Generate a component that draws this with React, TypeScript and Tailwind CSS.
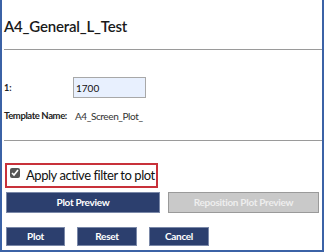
import React from "react";

const font = { fontFamily: "Lato, 'Noto Sans', sans-serif" };

function NavyButton({ label, className }: { label: string; className: string }) {
  return (
    <button
      className={`flex items-center justify-center border border-[#7a88a8] bg-[#2c3f6e] text-[10px] font-bold tracking-[-0.3px] text-white ${className}`}
    >
      {label}
    </button>
  );
}

export default function App() {
  return (
    <div className="h-[252px] w-[324px] bg-white" style={font}>
      <div className="flex h-full flex-col border-x-2 border-b-2 border-[#3b62a6] pl-[2px]">
        {/* Title */}
        <h1 className="pt-[16px] text-[15px] font-semibold leading-[20px] tracking-[-0.2px] text-[#1a1a1a]">
          A4_General_L_Test
        </h1>
        <div className="mt-[13px] h-px bg-[#9a9a9a]" />

        {/* Fields */}
        <div className="mt-[27px] flex items-center">
          <span className="w-[69px] text-[9px] font-bold text-[#222]">1:</span>
          <input
            defaultValue="1700"
            className="h-[21px] w-[73px] border border-[#a8a8a8] bg-[#e8f0fe] px-[2px] text-[10px] text-[#111] outline-none"
            style={font}
          />
        </div>
        <div className="mt-[11px] flex items-center">
          <span className="w-[71px] whitespace-nowrap text-[9.5px] font-bold tracking-[-0.4px] text-[#222]">Template Name:</span>
          <span className="text-[10px] tracking-[-0.4px] text-[#333]">A4_Screen_Plot_</span>
        </div>
        <div className="mt-[16px] h-px bg-[#9a9a9a]" />

        {/* Filter */}
        <label className="ml-[1px] mt-[22px] flex h-[25px] w-[153px] items-center gap-[6px] border-2 border-[#c8313a] pl-[3px]">
          <input type="checkbox" defaultChecked className="h-[10px] w-[10px] -translate-y-[3px] accent-[#555]" />
          <span className="whitespace-nowrap text-[13px] leading-none tracking-[-0.45px] text-[#111]">Apply active filter to plot</span>
        </label>

        {/* Preview buttons */}
        <div className="mt-[4px] flex gap-[8px] pl-[2px]">
          <NavyButton label="Plot Preview" className="h-[21px] w-[154px]" />
          <button className="flex h-[21px] w-[151px] items-center justify-center border border-[#9a9a9a] bg-[#c9c9c9] text-[10px] font-bold tracking-[-0.3px] text-[#eeeeee]">
            Reposition Plot Preview
          </button>
        </div>

        {/* Actions */}
        <div className="mt-[14px] flex gap-[12px] pl-[2px]">
          <NavyButton label="Plot" className="h-[19px] w-[59px]" />
          <NavyButton label="Reset" className="h-[19px] w-[60px]" />
          <NavyButton label="Cancel" className="h-[19px] w-[60px]" />
        </div>
      </div>
    </div>
  );
}
